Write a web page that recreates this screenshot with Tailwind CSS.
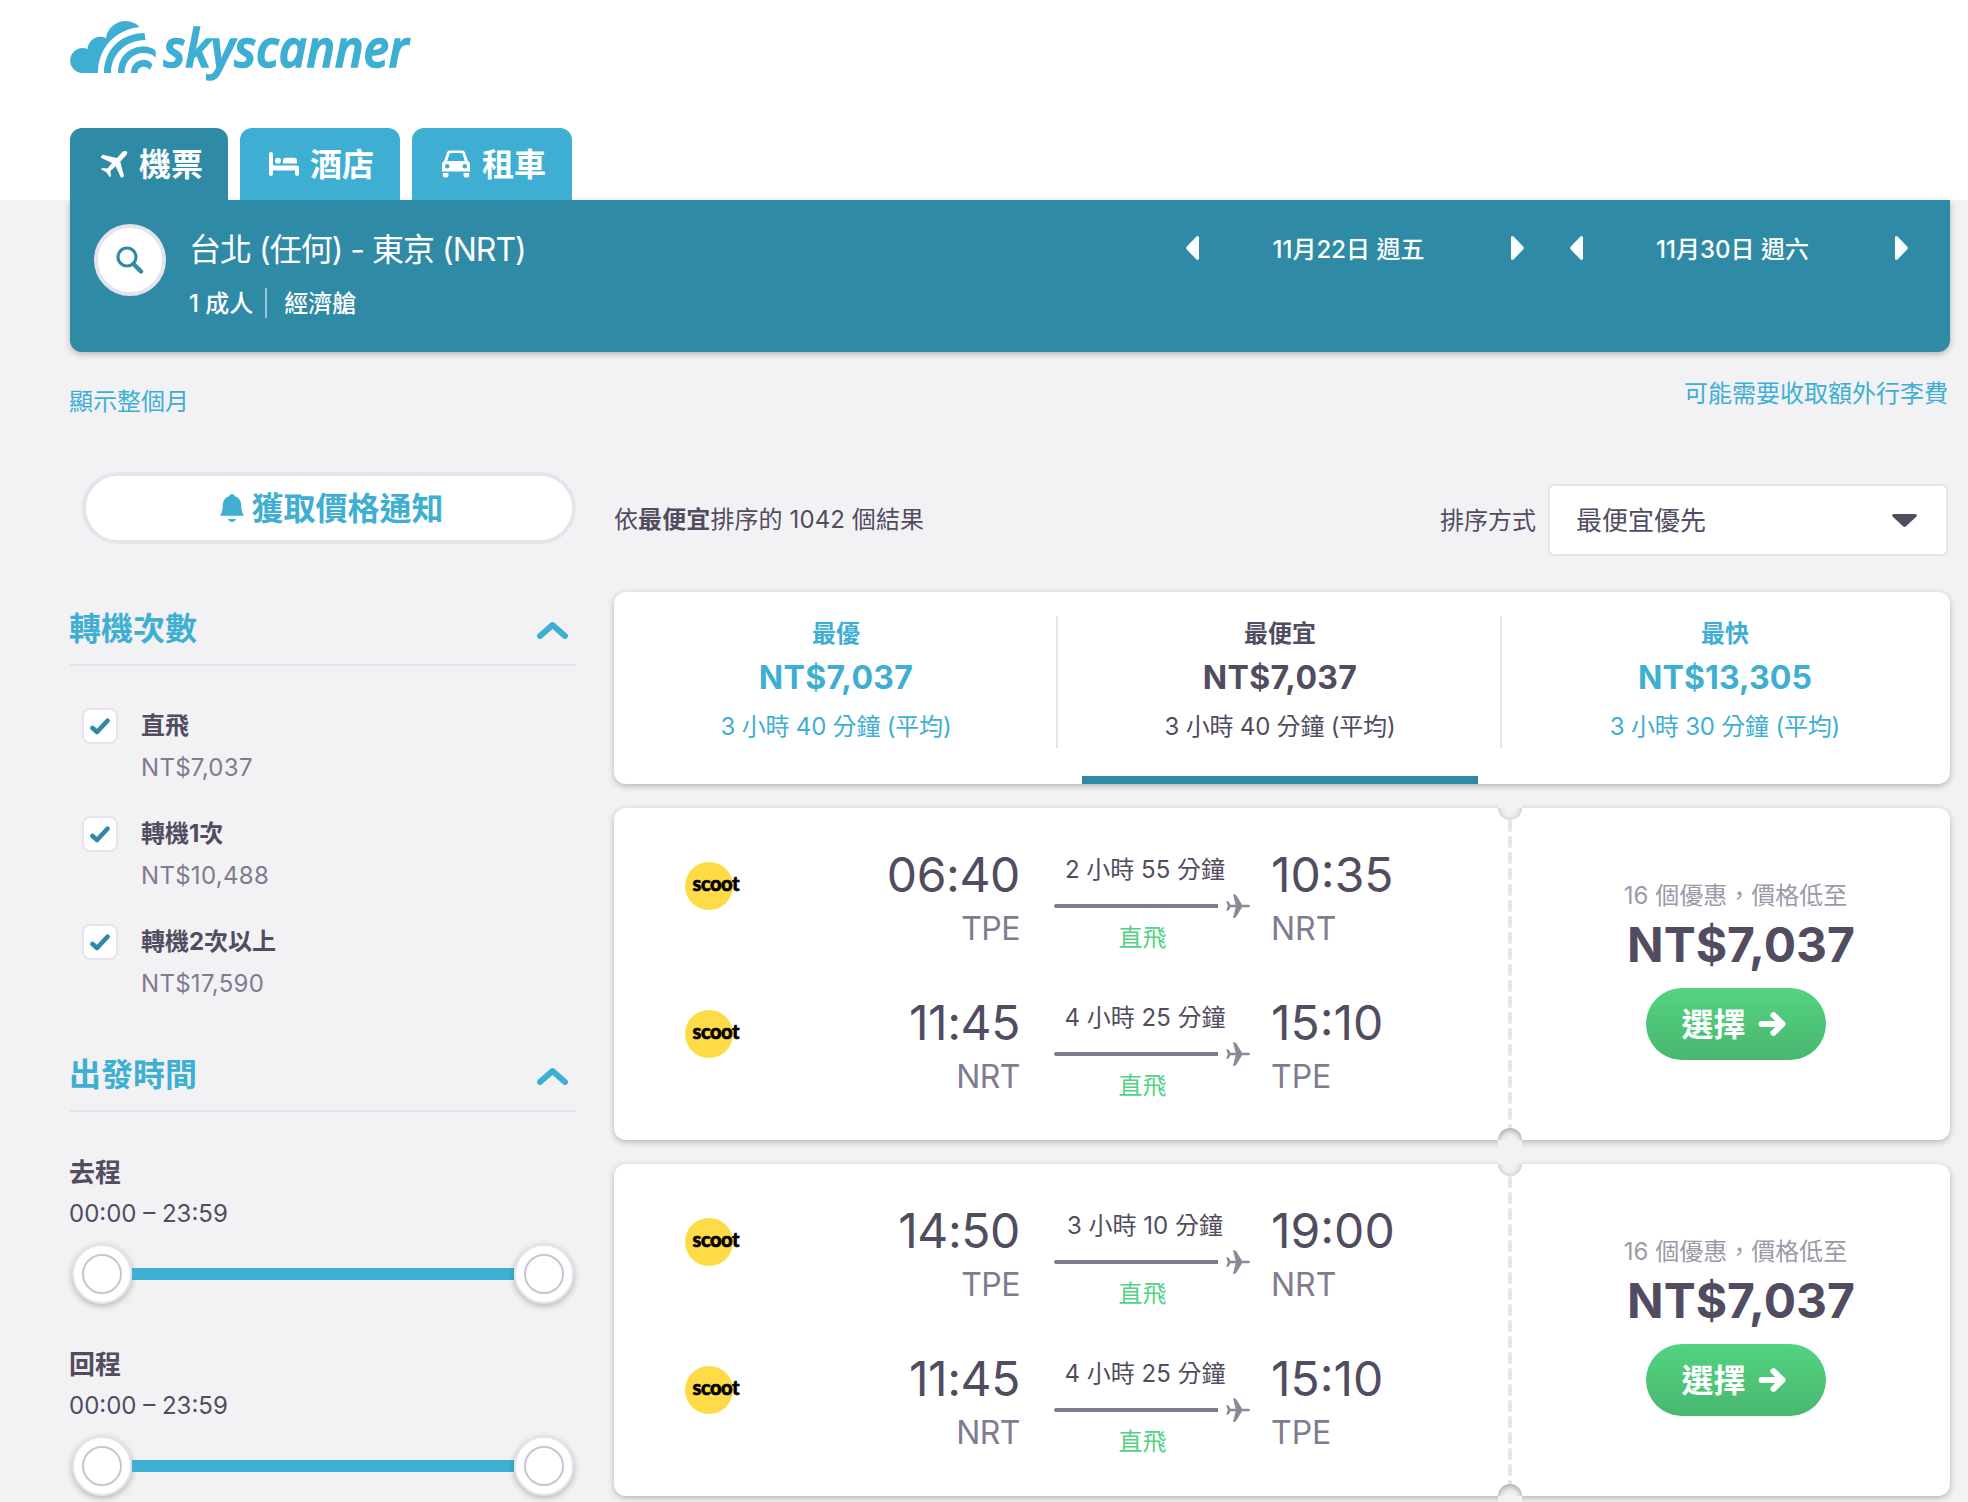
<!DOCTYPE html>
<html lang="zh-TW">
<head>
    <meta charset="UTF-8">
    <meta name="viewport" content="width=device-width, initial-scale=1.0">
    <title>Skyscanner</title>
    <script src="https://cdn.jsdelivr.net/npm/@tailwindcss/browser@4"></script>
</head>
<body class="bg-[#f2f2f5] text-[#524c61] text-2xl font-['Inter','Noto_Sans_CJK_TC',sans-serif] h-[1502px] overflow-hidden">
    <header class="bg-white h-[200px] pl-[70px] flex flex-col justify-between">
        <svg class="mt-4 w-[350px] h-[72px] overflow-visible" viewBox="20 16 350 72" fill="#3eafd2">
            <path d="M32.500 73A12.500 12.500 0 1 1 37.500 49A13 13 0 0 1 56 38A19.500 19.500 0 0 1 89.500 27C65 30 48 48 48 73Z"/>
            <path d="M54 73C54 49 72 33 94.500 33L95.500 40C76 40 61 54 61 73Z"/>
            <path d="M68 73C68 57 79 46.500 94 46.500C98.500 46.500 102 47.500 105.300 50.500Q106.300 53.500 105.500 57.500C102 54 98.500 53 94 53C83 53 74.500 61 74.500 73Z"/>
            <path d="M81 73C81 65 87 59.800 94 59.800C98 59.800 101 62 102.500 65L99.500 70C98 67.500 96 66.800 94 66.800C90 66.800 87.500 69.500 87.500 73Z"/>
            <text x="113.500" y="66.500" textLength="245" lengthAdjust="spacingAndGlyphs" class="font-['Open_Sans'] font-semibold italic text-[52px]" stroke="#3eafd2" stroke-width="1.600">skyscanner</text>
        </svg>
        <nav class="flex gap-3 h-[72px] text-white text-[32px] font-bold">
            <a class="w-[158px] bg-[#2f8aa6] rounded-t-xl flex items-center pl-[30px] gap-[11px]">
                <svg class="w-7 h-7" viewBox="0 0 28 28" fill="#fff"><path d="M22.500 1.800C24 .6 26.200.8 26.800 1.400C27.500 2.200 27.400 4 26 5.600L20.300 11.400L24 26.300L22.300 27.600C21.600 28 21 27.700 20.700 27.100L15.600 16.300L10.400 21L11 26L9.600 27.300L6.600 22.500L1 19.200L2.300 17.900L7.500 18.400L12 12.900L1.400 8C.8 7.600.7 7 1.100 6.400L2.500 4.700L17 8Z"/></svg>
                <span class="pt-0.5">機票</span>
            </a>
            <a class="w-[160px] bg-[#3eafd2] rounded-t-xl flex items-center pl-[29px] gap-[11px]">
                <svg class="w-[30px] h-6" viewBox="0 0 30 24" fill="#fff"><path d="M2 0a2 2 0 0 1 2 2v11.500h24a2 2 0 0 1 2 2V22a2 2 0 0 1-4 0v-3.500H4V22a2 2 0 0 1-4 0V2a2 2 0 0 1 2-2z"/><circle cx="9" cy="8.700" r="3"/><path d="M14 11.500V8.500Q14 5.700 17 5.700H25Q28 5.700 28 8.700V11.500Z"/></svg>
                <span class="pt-0.5">酒店</span>
            </a>
            <a class="w-[160px] bg-[#3eafd2] rounded-t-xl flex items-center pl-[30px] gap-[12px]">
                <svg class="w-[28px] h-7" viewBox="0 0 28 28" fill="#fff"><path fill-rule="evenodd" d="M7.500 0.500H20.500Q22.300.5 22.900 2.200L25.800 10.800Q28 12 28 14.500V22.500H0V14.500Q0 12 2.200 10.800L5.100 2.200Q5.700.5 7.500.5ZM7.800 3L5.200 11H22.800L20.200 3ZM5.200 14A2.200 2.200 0 1 0 5.200 18.500A2.200 2.200 0 1 0 5.200 14ZM22.800 14A2.200 2.200 0 1 0 22.800 18.500A2.200 2.200 0 1 0 22.800 14Z"/><path d="M.8 22.500H6.500V25.500Q6.500 27.500 4.500 27.500H2.800Q.8 27.500.8 25.500ZM21.500 22.500H27.200V25.500Q27.200 27.500 25.200 27.500H23.500Q21.500 27.500 21.500 25.500Z"/><path d="M0 21.500H28V23H0Z" fill="#3eafd2"/></svg>
                <span class="pt-0.5">租車</span>
            </a>
        </nav>
    </header>

    <div class="pl-[70px] pr-[18px]">
        <section class="h-[152px] bg-[#2f8aa6] rounded-b-xl shadow-[0_2px_6px_rgba(37,32,31,0.3)] text-white flex">
            <button class="ml-6 mt-6 w-[72px] h-[72px] rounded-full bg-white border-4 border-[#e6e4eb] flex items-center justify-center">
                <svg class="w-7 h-7" viewBox="0 0 28 28" fill="none" stroke="#2f8aa6"><circle cx="11" cy="11" r="9" stroke-width="3.200"/><path d="M17.500 18L25 25.500" stroke-width="4.400" stroke-linecap="round"/></svg>
            </button>
            <div class="ml-[23px] pt-[30px]">
                <h1 class="text-[32px] leading-10 tracking-[-1px]">台北 (任何) - 東京 (NRT)</h1>
                <div class="mt-[18px] flex leading-8 font-medium">
                    <span>1 成人</span>
                    <span class="ml-3 w-0.5 h-[30px] bg-white/50"></span>
                    <span class="ml-[17px]">經濟艙</span>
                </div>
            </div>
            <div class="ml-auto mr-[42px] pt-7 flex gap-[46px] h-[68px] font-medium">
                <div class="w-[338px] flex items-center justify-between">
                    <svg class="w-[13px] h-6" viewBox="0 0 13 24" fill="#fff"><path d="M13 1V23Q12 24.500 10.500 23.500L.8 13.500Q-.4 12 .8 10.500L10.500.5Q12-.5 13 1Z"/></svg>
                    <span class="pr-[13px] pt-[3px]">11月22日 週五</span>
                    <svg class="w-[13px] h-6" viewBox="0 0 13 24" fill="#fff"><path d="M0 1V23Q1 24.500 2.500 23.500L12.200 13.500Q13.400 12 12.200 10.500L2.500.5Q1-.5 0 1Z"/></svg>
                </div>
                <div class="w-[338px] flex items-center justify-between">
                    <svg class="w-[13px] h-6" viewBox="0 0 13 24" fill="#fff"><path d="M13 1V23Q12 24.500 10.500 23.500L.8 13.500Q-.4 12 .8 10.500L10.500.5Q12-.5 13 1Z"/></svg>
                    <span class="pr-[13px] pt-[3px]">11月30日 週六</span>
                    <svg class="w-[13px] h-6" viewBox="0 0 13 24" fill="#fff"><path d="M0 1V23Q1 24.500 2.500 23.500L12.200 13.500Q13.400 12 12.200 10.500L2.500.5Q1-.5 0 1Z"/></svg>
                </div>
            </div>
        </section>

        <div class="h-[120px] flex justify-between text-[#3eafd2] leading-8">
            <a class="-ml-px pt-[34px]">顯示整個月</a>
            <a class="pt-[26px] pr-0.5">可能需要收取額外行李費</a>
        </div>

        <div class="flex gap-[38px]">
            <aside class="w-[506px]">
                <button class="ml-3 w-[494px] h-[72px] rounded-full bg-white border-4 border-[#e6e4eb] text-[#3eafd2] text-[32px] font-bold flex items-center justify-center gap-[7px] pl-1.5">
                    <svg class="w-6 h-7" viewBox="0 0 24 28" fill="#3eafd2"><path d="M12 0C13.800 0 14.500 1 14.700 2.200C19 3.400 21.300 7 21.300 11.500C21.300 16 22 18.500 24 21.700H0C2 18.500 2.700 16 2.700 11.500C2.700 7 5 3.400 9.300 2.200C9.500 1 10.200 0 12 0ZM8 25H16Q15 28 12 28Q9 28 8 25Z"/></svg>
                    <span class="pt-0.5">獲取價格通知</span>
                </button>

                <div class="mt-12 h-[74px] border-b-2 border-[#e6e4eb] flex items-center justify-between pr-2">
                    <h2 class="-ml-px pt-0.5 text-[#3eafd2] text-[32px] font-bold">轉機次數</h2>
                    <svg class="w-[31px] h-[18px] mt-1" viewBox="0 0 31 18" fill="none" stroke="#3eafd2" stroke-width="6" stroke-linecap="round" stroke-linejoin="round"><path d="M3 15L15.500 4L28 15"/></svg>
                </div>
                <ul id="stops" class="pt-[42px]"></ul>

                <div class="mt-1.5 h-[74px] border-b-2 border-[#e6e4eb] flex items-center justify-between pr-2">
                    <h2 class="-ml-px pt-0.5 text-[#3eafd2] text-[32px] font-bold">出發時間</h2>
                    <svg class="w-[31px] h-[18px] mt-1" viewBox="0 0 31 18" fill="none" stroke="#3eafd2" stroke-width="6" stroke-linecap="round" stroke-linejoin="round"><path d="M3 15L15.500 4L28 15"/></svg>
                </div>
                <div id="times"></div>
            </aside>

            <main class="w-[1336px]">
                <div class="h-[120px] pt-3 flex items-start justify-between">
                    <p class="leading-[72px] tracking-[0.1px]">依<b>最便宜</b>排序的 1042 個結果</p>
                    <div class="flex items-center pr-0.5">
                        <label class="mr-3 pt-0.5">排序方式</label>
                        <div class="w-[400px] h-[72px] bg-white border-2 border-[#e6e4eb] rounded-md flex items-center justify-between pl-[26px] pr-[29px] text-[26px]">
                            <span class="pt-0.5">最便宜優先</span>
                            <svg class="w-[25px] h-[13px]" viewBox="0 0 25 13" fill="#524c61"><path d="M1.500 0H23.500Q25.500.8 24.500 2.500L14 12.300Q12.500 13.600 11 12.300L.5 2.500Q-.5.800 1.500 0Z"/></svg>
                        </div>
                    </div>
                </div>

                <div class="h-48 bg-white rounded-xl shadow-[0_2px_6px_rgba(37,32,31,0.3)] grid grid-cols-[444px_444px_448px] text-center">
                    <div class="pt-6 text-[#3eafd2]">
                        <div class="h-[132px] pl-0.5 border-r-2 border-[#e6e4eb]">
                            <div class="font-bold leading-9">最優</div>
                            <div class="text-[32px] font-bold leading-[52px] tracking-[0.3px]">NT$7,037</div>
                            <div class="leading-[46px] tracking-[-0.2px]">3 小時 40 分鐘 (平均)</div>
                        </div>
                    </div>
                    <div class="pt-6">
                        <div class="h-[132px] pl-0.5 border-r-2 border-[#e6e4eb]">
                            <div class="font-bold leading-9">最便宜</div>
                            <div class="text-[32px] font-bold leading-[52px] tracking-[0.3px]">NT$7,037</div>
                            <div class="leading-[46px] tracking-[-0.2px]">3 小時 40 分鐘 (平均)</div>
                        </div>
                        <div class="mt-7 ml-6 w-[396px] h-2 bg-[#2f8aa6]"></div>
                    </div>
                    <div class="pt-6 pr-0.5 text-[#3eafd2]">
                        <div class="font-bold leading-9">最快</div>
                        <div class="text-[32px] font-bold leading-[52px] tracking-[0.1px]">NT$13,305</div>
                        <div class="leading-[46px] tracking-[-0.2px]">3 小時 30 分鐘 (平均)</div>
                    </div>
                </div>

                <div id="tickets"></div>
            </main>
        </div>
    </div>

    <script>
        const stops = [
            { label: '直飛', price: 'NT$7,037' },
            { label: '轉機1次', price: 'NT$10,488' },
            { label: '轉機2次以上', price: 'NT$17,590' },
        ];

        const tickets = [
            [
                { dep: '06:40', from: 'TPE', arr: '10:35', to: 'NRT', duration: '2 小時 55 分鐘' },
                { dep: '11:45', from: 'NRT', arr: '15:10', to: 'TPE', duration: '4 小時 25 分鐘' },
            ],
            [
                { dep: '14:50', from: 'TPE', arr: '19:00', to: 'NRT', duration: '3 小時 10 分鐘' },
                { dep: '11:45', from: 'NRT', arr: '15:10', to: 'TPE', duration: '4 小時 25 分鐘' },
            ],
        ];

        document.getElementById('stops').innerHTML = stops.map(s => `
            <li class="h-[108px] pl-3 flex gap-[23px]">
                <span class="w-9 h-9 rounded-lg bg-white border-2 border-[#e6e4eb] flex items-center justify-center">
                    <svg class="w-5 h-[17px]" viewBox="0 0 20 17" fill="none" stroke="#2f8aa6" stroke-width="4.600" stroke-linecap="round" stroke-linejoin="round"><path d="M2.500 10L7 14L17.500 2.700"/></svg>
                </span>
                <div class="leading-9">
                    <div class="font-bold">${s.label}</div>
                    <div class="mt-1.5 text-[#817b8f] tracking-[0.3px]">${s.price}</div>
                </div>
            </li>`).join('');

        const handle = `<span class="w-[60px] h-[60px] rounded-full bg-white border-2 border-[#e6e4eb] shadow-[0_2px_6px_rgba(37,32,31,0.3)] flex items-center justify-center"><span class="w-10 h-10 rounded-full border-2 border-[#c8c5d3]"></span></span>`;

        document.getElementById('times').innerHTML = ['去程', '回程'].map(name => `
            <div class="pt-[45px] leading-8">
                <div class="-ml-px text-[26px] leading-8 font-bold">${name}</div>
                <div class="-ml-px mt-[9px]">00:00 – 23:59</div>
                <div class="mt-3.5 px-0.5 flex items-center">
                    ${handle}<span class="flex-1 h-3 bg-[#3eafd2]"></span>${handle}
                </div>
            </div>`).join('');

        const leg = f => `
            <div class="h-[148px] flex items-start">
                <svg class="mt-[11px] w-14 h-12 overflow-visible" viewBox="0 0 56 48">
                    <circle cx="24" cy="24" r="24" fill="#fedb47"/>
                    <text x="7.500" y="29.300" textLength="47" lengthAdjust="spacing" class="font-['Lato'] font-black text-[20px]" stroke="#000" stroke-width="0.600">scoot</text>
                </svg>
                <div class="w-[279px] text-right">
                    <div class="text-5xl leading-12 tracking-[-0.4px]">${f.dep}</div>
                    <div class="mt-2.5 text-[32px] leading-10 tracking-[-0.5px] text-[#817b8f]">${f.from}</div>
                </div>
                <div class="ml-[34px] w-[196px]">
                    <div class="mt-[3px] leading-8 w-[182px] text-center whitespace-nowrap">${f.duration}</div>
                    <div class="mt-2 flex items-center justify-between">
                        <span class="w-[164px] h-1 rounded-l-full bg-[#817b8f]"></span>
                        <svg class="w-6 h-6" viewBox="0 0 24 24" fill="#8d879a"><path d="M24 12Q24 13.300 22 13.300H16L10.500 22.500Q9.500 24 7 24L9.700 13.300H4.500L2.800 16.200Q2 17 .3 17L1.800 12L.3 7Q2 7 2.800 7.800L4.500 10.700H9.700L7 0Q9.500 0 10.500 1.500L16 10.700H22Q24 10.700 24 12Z"/></svg>
                    </div>
                    <div class="mt-1 leading-8 w-[177px] text-center text-[#54d284]">直飛</div>
                </div>
                <div class="ml-[21px]">
                    <div class="text-5xl leading-12">${f.arr}</div>
                    <div class="mt-2.5 text-[32px] leading-10 text-[#817b8f]">${f.to}</div>
                </div>
            </div>`;

        document.getElementById('tickets').innerHTML = tickets.map(legs => `
            <article class="mt-6 h-[332px] bg-white rounded-xl shadow-[0_2px_6px_rgba(37,32,31,0.3)] flex">
                <div class="w-[884px] pl-[71px] pt-[43px]">${legs.map(leg).join('')}</div>
                <div class="relative w-6 flex flex-col items-center">
                    <span class="absolute -top-2 w-6 h-2 bg-[#f2f2f5]"></span>
                    <span class="w-6 h-3 flex items-end overflow-hidden"><span class="w-6 h-6 shrink-0 rounded-full bg-[#f2f2f5] shadow-[inset_0_1px_6px_rgba(37,32,31,0.3)]"></span></span>
                    <svg class="w-1 h-[308px]" viewBox="0 0 4 308"><path d="M2 2V308" stroke="#e6e4eb" stroke-width="4" stroke-linecap="round" stroke-dasharray="8 8"/></svg>
                    <span class="w-6 h-3 flex items-start overflow-hidden"><span class="w-6 h-6 shrink-0 rounded-full bg-[#f2f2f5] shadow-[inset_0_2px_6px_rgba(37,32,31,0.4)]"></span></span>
                    <span class="absolute -bottom-2 w-6 h-2 bg-[#f2f2f5]"></span>
                </div>
                <div class="w-[428px] pt-[72px] flex flex-col items-center">
                    <div class="pr-px leading-8 text-[#9d99a8]">16 個優惠，價格低至</div>
                    <div class="mt-[3px] pl-2.5 text-5xl leading-[60px] font-bold">NT$7,037</div>
                    <button class="mt-[13px] w-[180px] h-[72px] rounded-full bg-linear-to-b from-[#54d380] to-[#48b770] text-white text-[32px] font-bold flex items-center justify-center gap-3 pr-[5px]">
                        <span class="pt-0.5">選擇</span>
                        <svg class="w-7 h-6" viewBox="0 0 28 24" fill="none" stroke="#fff" stroke-width="6" stroke-linecap="round" stroke-linejoin="round"><path d="M3.500 12H23M15.500 3.200L24.500 12L15.500 20.800"/></svg>
                    </button>
                </div>
            </article>`).join('');
    </script>
</body>
</html>
